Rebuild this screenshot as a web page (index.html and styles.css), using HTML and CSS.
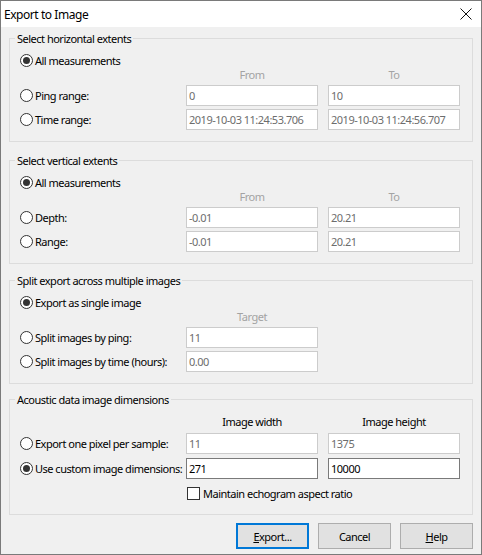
FILE: index.html
```html
<!DOCTYPE html>
<html>
<head>
<meta charset="utf-8">
<title>Export to Image</title>
<link rel="stylesheet" href="styles.css">
</head>
<body>
<div class="window">
  <div class="titlebar">
    <span class="title">Export to Image</span>
    <svg class="close" width="12" height="12" viewBox="0 0 12 12"><path d="M0.5 0.5 L11.5 11.5 M11.5 0.5 L0.5 11.5" stroke="#111" stroke-width="1" fill="none"/></svg>
  </div>
  <div class="client">
    <fieldset class="group g1">
      <legend>Select horizontal extents</legend>
      <div class="opt first"><span class="radio on"></span><span>All measurements</span></div>
      <div class="heads"><span></span><span>From</span><span>To</span></div>
      <div class="row r1">
        <div class="opt"><span class="radio"></span><span>Ping range:</span></div>
        <div class="field">0</div>
        <div class="field">10</div>
      </div>
      <div class="row r2">
        <div class="opt"><span class="radio"></span><span>Time range:</span></div>
        <div class="field">2019-10-03 11:24:53.706</div>
        <div class="field">2019-10-03 11:24:56.707</div>
      </div>
    </fieldset>

    <fieldset class="group g2">
      <legend>Select vertical extents</legend>
      <div class="opt first"><span class="radio on"></span><span>All measurements</span></div>
      <div class="heads"><span></span><span>From</span><span>To</span></div>
      <div class="row r1">
        <div class="opt"><span class="radio"></span><span>Depth:</span></div>
        <div class="field">-0.01</div>
        <div class="field">20.21</div>
      </div>
      <div class="row r2">
        <div class="opt"><span class="radio"></span><span>Range:</span></div>
        <div class="field">-0.01</div>
        <div class="field">20.21</div>
      </div>
    </fieldset>

    <fieldset class="group g3">
      <legend>Split export across multiple images</legend>
      <div class="opt first"><span class="radio on"></span><span>Export as single image</span></div>
      <div class="heads"><span></span><span>Target</span><span></span></div>
      <div class="row r1">
        <div class="opt"><span class="radio"></span><span>Split images by ping:</span></div>
        <div class="field">11</div>
        <span></span>
      </div>
      <div class="row r2">
        <div class="opt"><span class="radio"></span><span>Split images by time (hours):</span></div>
        <div class="field">0.00</div>
        <span></span>
      </div>
    </fieldset>

    <fieldset class="group g4">
      <legend>Acoustic data image dimensions</legend>
      <div class="heads dark"><span></span><span>Image width</span><span>Image height</span></div>
      <div class="row r1">
        <div class="opt"><span class="radio"></span><span>Export one pixel per sample:</span></div>
        <div class="field">11</div>
        <div class="field">1375</div>
      </div>
      <div class="row r2b">
        <div class="opt"><span class="radio on"></span><span>Use custom image dimensions:</span></div>
        <div class="field on">271</div>
        <div class="field on">10000</div>
      </div>
      <div class="row checkrow">
        <span></span>
        <div class="opt chk"><span class="checkbox"></span><span>Maintain echogram aspect ratio</span></div>
      </div>
    </fieldset>

    <div class="buttons">
      <div class="btn default"><span><u>E</u>xport...</span></div>
      <div class="btn"><span>Cancel</span></div>
      <div class="btn"><span><u>H</u>elp</span></div>
    </div>
  </div>
</div>
</body>
</html>
```

FILE: styles.css
```css
* { box-sizing: border-box; }
html, body { margin: 0; padding: 0; background: #ffffff; }
body {
  font-family: "Noto Sans", "Open Sans", sans-serif;
  font-size: 11px;
  letter-spacing: -0.5px;
  color: #000000;
}
.window {
  width: 482px;
  height: 555px;
  border: 1px solid #7a7a7a;
  background: #f0f0f0;
  display: flex;
  flex-direction: column;
}
.titlebar {
  height: 26px;
  flex: none;
  background: #ffffff;
  display: flex;
  align-items: center;
  justify-content: space-between;
  padding: 0 9px 0 3px;
}
.title { font-size: 12px; letter-spacing: -0.45px; }
.close { display: block; }
.client {
  padding: 0 8px;
  display: flex;
  flex-direction: column;
}
.group {
  margin: 0;
  padding: 0 12px 11px 10px;
  border: 1px solid #dcdcdc;
  min-width: 0;
}
.g1 { margin-top: 3px; }
.g2 { margin-top: 10px; }
.g3 { margin-top: 8px; }
.g4 { margin-top: 7px; padding-bottom: 13px; }
legend {
  padding: 0 2px;
  margin-left: -5px;
  height: 17px;
  line-height: 17px;
}
.opt {
  display: flex;
  align-items: center;
  height: 16px;
  white-space: nowrap;
}
.opt.first { margin-top: 5px; }
.radio {
  width: 13px;
  height: 13px;
  flex: none;
  border: 1px solid #333333;
  border-radius: 50%;
  background: #ffffff;
  margin-right: 2px;
  display: flex;
  align-items: center;
  justify-content: center;
}
.radio.on::after {
  content: "";
  width: 7px;
  height: 7px;
  border-radius: 50%;
  background: #333333;
}
.heads {
  display: grid;
  grid-template-columns: 156px 132px 132px;
  column-gap: 10px;
  height: 13px;
  line-height: 13px;
  text-align: center;
  color: #a3a3a3;
}
.g4 .heads {
  margin-top: 6px;
  height: 16px;
  line-height: 16px;
  color: #000000;
}
.row {
  display: grid;
  grid-template-columns: 156px 132px 132px;
  column-gap: 10px;
  height: 21px;
  align-items: center;
}
.r1 { margin-top: 4px; }
.r2 { margin-top: 3px; }
.g4 .r1 { margin-top: 3px; }
.r2b { margin-top: 4px; }
.field {
  height: 21px;
  border: 1px solid #cccccc;
  background: #ffffff;
  color: #6d6d6d;
  padding: 0 2px;
  line-height: 19px;
  white-space: nowrap;
  overflow: hidden;
}
.field.on { border-color: #7a7a7a; color: #000000; }
.checkrow { margin-top: 6px; height: 16px; }
.chk { padding-left: 1px; }
.checkbox {
  width: 13px;
  height: 13px;
  flex: none;
  border: 1px solid #333333;
  background: #ffffff;
  margin-right: 3px;
}
.buttons {
  display: flex;
  justify-content: flex-end;
  gap: 9px;
  margin-top: 8px;
}
.btn {
  width: 73px;
  height: 26px;
  border: 1px solid #adadad;
  background: #e1e1e1;
  display: flex;
  align-items: center;
  justify-content: center;
}
.btn.default { border: 2px solid #0078d7; }
```
